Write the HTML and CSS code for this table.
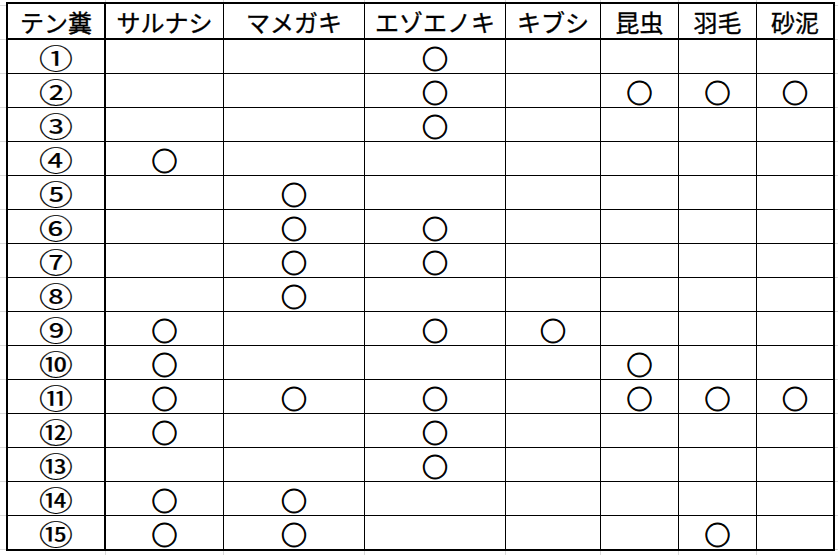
FILE: index.html
```html
<!DOCTYPE html>
<html lang="ja">
<head>
<meta charset="utf-8">
<title>テン糞</title>
<link rel="stylesheet" href="styles.css">
</head>
<body>
<div class="sheet">
<table class="grid">
<colgroup>
<col class="c0"><col class="c1"><col class="c2"><col class="c3"><col class="c4"><col class="c5"><col class="c6"><col class="c7">
</colgroup>
<thead>
<tr><th class="key">テン糞</th><th>サルナシ</th><th>マメガキ</th><th>エゾエノキ</th><th>キブシ</th><th>昆虫</th><th>羽毛</th><th>砂泥</th></tr>
</thead>
<tbody>
<tr><td class="key"><span class="num">①</span></td><td></td><td></td><td class="m">○</td><td></td><td></td><td></td><td></td></tr>
<tr><td class="key"><span class="num">②</span></td><td></td><td></td><td class="m">○</td><td></td><td class="m">○</td><td class="m">○</td><td class="m">○</td></tr>
<tr><td class="key"><span class="num">③</span></td><td></td><td></td><td class="m">○</td><td></td><td></td><td></td><td></td></tr>
<tr><td class="key"><span class="num">④</span></td><td class="m">○</td><td></td><td></td><td></td><td></td><td></td><td></td></tr>
<tr><td class="key"><span class="num">⑤</span></td><td></td><td class="m">○</td><td></td><td></td><td></td><td></td><td></td></tr>
<tr><td class="key"><span class="num">⑥</span></td><td></td><td class="m">○</td><td class="m">○</td><td></td><td></td><td></td><td></td></tr>
<tr><td class="key"><span class="num">⑦</span></td><td></td><td class="m">○</td><td class="m">○</td><td></td><td></td><td></td><td></td></tr>
<tr><td class="key"><span class="num">⑧</span></td><td></td><td class="m">○</td><td></td><td></td><td></td><td></td><td></td></tr>
<tr><td class="key"><span class="num">⑨</span></td><td class="m">○</td><td></td><td class="m">○</td><td class="m">○</td><td></td><td></td><td></td></tr>
<tr><td class="key"><span class="num">⑩</span></td><td class="m">○</td><td></td><td></td><td></td><td class="m">○</td><td></td><td></td></tr>
<tr><td class="key"><span class="num">⑪</span></td><td class="m">○</td><td class="m">○</td><td class="m">○</td><td></td><td class="m">○</td><td class="m">○</td><td class="m">○</td></tr>
<tr><td class="key"><span class="num">⑫</span></td><td class="m">○</td><td></td><td class="m">○</td><td></td><td></td><td></td><td></td></tr>
<tr><td class="key"><span class="num">⑬</span></td><td></td><td></td><td class="m">○</td><td></td><td></td><td></td><td></td></tr>
<tr><td class="key"><span class="num">⑭</span></td><td class="m">○</td><td class="m">○</td><td></td><td></td><td></td><td></td><td></td></tr>
<tr class="last"><td class="key"><span class="num">⑮</span></td><td class="m">○</td><td class="m">○</td><td></td><td></td><td></td><td class="m">○</td><td></td></tr>
</tbody>
</table>
</div>
</body>
</html>
```
FILE: styles.css
```css
html, body {
  margin: 0;
  padding: 0;
  background: #fff;
}

.sheet {
  width: 838px;
  height: 555px;
  box-sizing: border-box;
  padding: 2px 0 0 6px;
  background-color: #fff;
  background-image:
    linear-gradient(#d9d9d9, #d9d9d9),
    linear-gradient(#d9d9d9, #d9d9d9),
    linear-gradient(#d9d9d9, #d9d9d9),
    linear-gradient(#d9d9d9, #d9d9d9),
    linear-gradient(#d9d9d9, #d9d9d9),
    linear-gradient(#d9d9d9, #d9d9d9),
    linear-gradient(#d9d9d9, #d9d9d9),
    repeating-linear-gradient(to bottom, transparent 0, transparent 33px, #d9d9d9 33px, #d9d9d9 34px);
  background-repeat: no-repeat, no-repeat, no-repeat, no-repeat, no-repeat, no-repeat, no-repeat, repeat;
  background-size: 1px 100%, 1px 100%, 1px 100%, 1px 100%, 1px 100%, 1px 100%, 1px 100%, 100% 34px;
  background-position: 105px 0, 223px 0, 364px 0, 505px 0, 600px 0, 678px 0, 756px 0, 0 6px;
}

.grid {
  border-collapse: separate;
  border-spacing: 0;
  table-layout: fixed;
  width: 829px;
  background: #fff;
  border: 2px solid #000;
  font-family: "Noto Sans CJK JP", "Noto Sans", sans-serif;
  color: #000;
}

.c0 { width: 98px; }
.c1 { width: 118px; }
.c2 { width: 141px; }
.c3 { width: 141px; }
.c4 { width: 95px; }
.c5 { width: 78px; }
.c6 { width: 78px; }
.c7 { width: 76px; }

.grid th,
.grid td {
  padding: 0;
  box-sizing: border-box;
  border-right: 1px solid #000;
  border-bottom: 1px solid #000;
  text-align: center;
  vertical-align: top;
  white-space: nowrap;
}

.grid th:last-child,
.grid td:last-child {
  border-right: 0;
}

.grid th {
  height: 36px;
  padding-top: 2px;
  border-bottom: 2px solid #000;
  font-weight: normal;
  font-size: 24px;
  line-height: 32px;
  -webkit-text-stroke: 0.35px #000;
}

.grid td {
  height: 34px;
  font-size: 22px;
  line-height: 31px;
  padding-top: 2px;
}

.grid .key {
  border-right: 2px solid #000;
  line-height: 31px;
}

.num {
  display: inline-block;
  vertical-align: top;
  height: 31px;
  font-size: 22px;
  line-height: 31px;
  transform: scale(1.54, 1.25);
  -webkit-text-stroke: 0.18px #000;
}

.grid tr.last td {
  border-bottom: 0;
  height: 33px;
}

.grid td.m {
  font-size: 26px;
  line-height: 30px;
  padding-top: 3px;
  -webkit-text-stroke: 0.9px #000;
}
```
